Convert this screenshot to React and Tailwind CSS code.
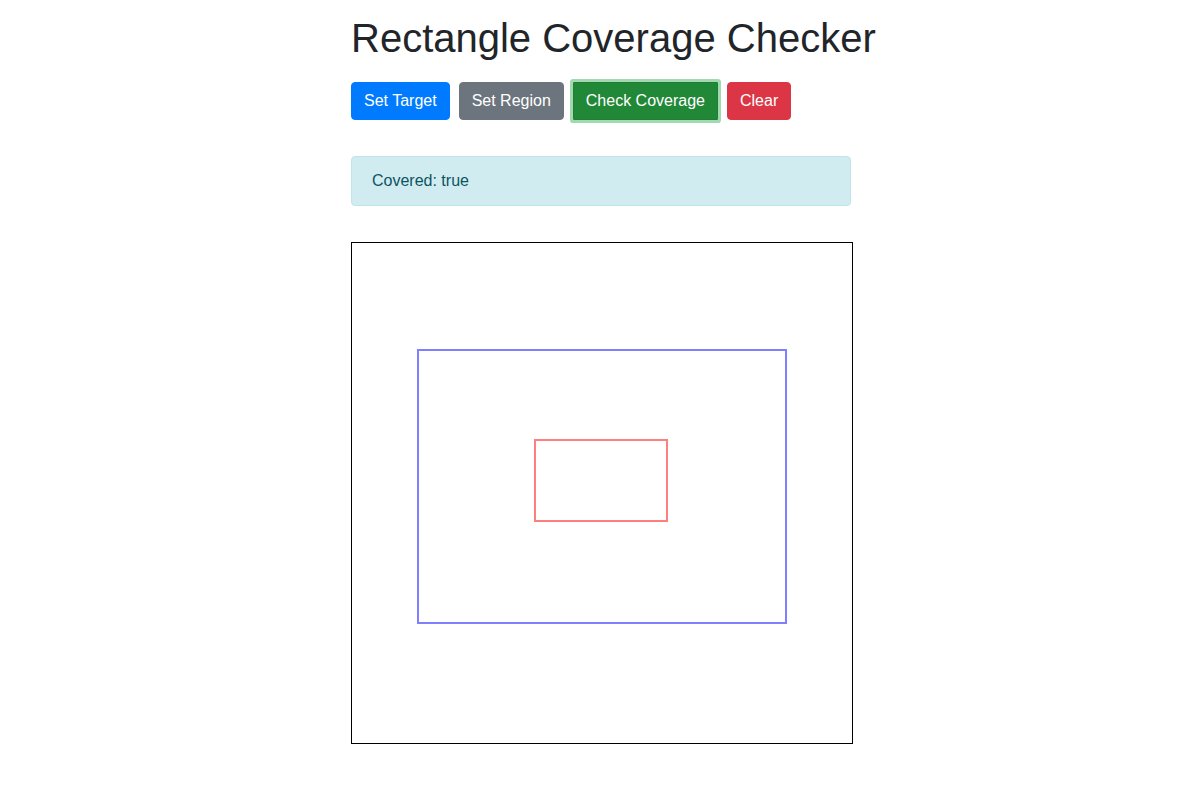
import React from "react";

const font = { fontFamily: '"Liberation Sans", Arial, sans-serif' };

export default function App() {
  return (
    <main
      className="min-h-[787px] bg-white pl-[351px] pt-[14px] text-[#212529]"
      style={font}
    >
      <h1 className="text-[40px] leading-[48px] font-medium mb-[20px]">
        Rectangle Coverage Checker
      </h1>

      <div className="flex items-center gap-[9px]">
        <button
          type="button"
          className="h-[38px] px-[12px] rounded-[4px] bg-[#007bff] border border-[#007bff] text-white text-[16px] leading-[24px]"
        >
          Set Target
        </button>
        <button
          type="button"
          className="h-[38px] px-[12px] rounded-[4px] bg-[#6c757d] border border-[#6c757d] text-white text-[16px] leading-[24px]"
        >
          Set Region
        </button>
        <button
          type="button"
          className="h-[38px] px-[12px] rounded-[1px] bg-[#218838] border border-[#1e7e34] text-white text-[16px] leading-[24px] shadow-[0_0_0_3px_rgba(72,180,97,0.5)]"
        >
          Check Coverage
        </button>
        <button
          type="button"
          className="h-[38px] px-[12px] rounded-[4px] bg-[#dc3545] border border-[#dc3545] text-white text-[16px] leading-[24px]"
        >
          Clear
        </button>
      </div>

      <div className="mt-[36px] w-[500px] rounded-[4px] border border-[#bee5eb] bg-[#d1ecf1] px-[20px] py-[12px] text-[16px] leading-[24px] text-[#0c5460]">
        Covered: true
      </div>

      {/* drawing surface: target (blue) and region (red) */}
      <div className="mt-[36px] w-[502px] h-[502px] border border-black">
        <svg width="500" height="500" viewBox="0 0 500 500" className="block">
          <rect
            x="66"
            y="107"
            width="368"
            height="273"
            fill="none"
            stroke="rgba(0,0,255,0.5)"
            strokeWidth="2"
          />
          <rect
            x="183"
            y="197"
            width="132"
            height="81"
            fill="none"
            stroke="rgba(255,0,0,0.5)"
            strokeWidth="2"
          />
        </svg>
      </div>
    </main>
  );
}
